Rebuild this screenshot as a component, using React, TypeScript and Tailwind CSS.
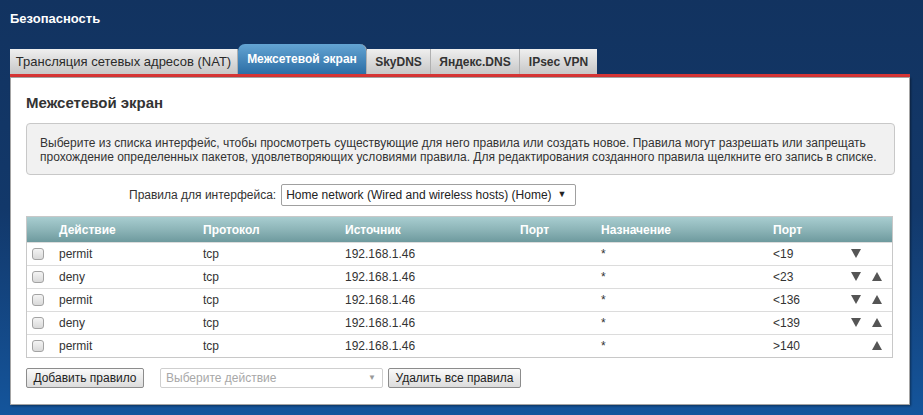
import React from "react";

const rows = [
  { a: "permit", p: "tcp", s: "192.168.1.46", port: "<19", down: true, up: false },
  { a: "deny", p: "tcp", s: "192.168.1.46", port: "<23", down: true, up: true },
  { a: "permit", p: "tcp", s: "192.168.1.46", port: "<136", down: true, up: true },
  { a: "deny", p: "tcp", s: "192.168.1.46", port: "<139", down: true, up: true },
  { a: "permit", p: "tcp", s: "192.168.1.46", port: ">140", down: false, up: true },
];

const Down = () => (
  <svg width="10" height="9" viewBox="0 0 10 9">
    <polygon points="0,0 10,0 5,9" fill="#555" />
  </svg>
);
const Up = () => (
  <svg width="10" height="9" viewBox="0 0 10 9">
    <polygon points="0,9 10,9 5,0" fill="#555" />
  </svg>
);

const Check = () => (
  <div className="w-[12px] h-[12px] rounded-[3px] border border-[#a3a3a3] bg-gradient-to-b from-[#f4f4f4] to-[#d9d9d9]" />
);

export default function App() {
  return (
    <div
      className="w-full h-[415px] bg-gradient-to-b from-[#123360] via-[#12386a] to-[#14559c] overflow-hidden"
      style={{ fontFamily: '"Liberation Sans", Arial, sans-serif' }}
    >
      <div className="h-[44px] pl-[10px] pt-[11px] text-[13px] leading-[16px] font-bold text-white">
        Безопасность
      </div>
      <div className="flex items-end h-[30px] ml-[10px]">
        <div className="w-[228px] h-[25px] flex items-center justify-center text-[13px] text-[#2a2a2a] bg-gradient-to-b from-[#efefef] to-[#c7c7c7] border-r border-[#b0b0b0]">
          Трансляция сетевых адресов (NAT)
        </div>
        <div className="w-[129px] h-[30px] flex items-center justify-center text-[12px] font-bold text-white rounded-t-[7px] bg-gradient-to-b from-[#63a4d3] to-[#2c6ea5] border-r border-[#b0b0b0]">
          Межсетевой экран
        </div>
        <div className="w-[64px] h-[25px] flex items-center justify-center text-[12px] font-bold text-[#333] bg-gradient-to-b from-[#efefef] to-[#c7c7c7] border-r border-[#b0b0b0]">
          SkyDNS
        </div>
        <div className="w-[89px] h-[25px] flex items-center justify-center text-[12px] font-bold text-[#333] bg-gradient-to-b from-[#efefef] to-[#c7c7c7] border-r border-[#b0b0b0]">
          Яндекс.DNS
        </div>
        <div className="w-[77px] h-[25px] flex items-center justify-center text-[12px] font-bold text-[#333] bg-gradient-to-b from-[#efefef] to-[#c7c7c7]">
          IPsec VPN
        </div>
      </div>
      <div className="ml-[10px] w-[900px] h-[3px] bg-[#d63434]" />
      <div className="ml-[10px] w-[900px] h-[328px] bg-white border border-[#a4a4a4] pl-[15px] shadow-[1px_1px_2px_rgba(0,0,0,0.4)]">
        <div className="pt-[16px] text-[15px] leading-[18px] font-bold text-[#333]">
          Межсетевой экран
        </div>
        <div className="mt-[11px] w-[869px] h-[52px] rounded-[4px] border border-[#c8c8c8] bg-[#f1f1f1] pl-[13px] pt-[12px] text-[12px] leading-[14px] text-[#333]">
          Выберите из списка интерфейс, чтобы просмотреть существующие для него правила или создать новое. Правила могут разрешать или запрещать
          <br />
          прохождение определенных пакетов, удовлетворяющих условиями правила. Для редактирования созданного правила щелкните его запись в списке.
        </div>
        <div className="mt-[9px] flex items-center h-[22px] pl-[103px]">
          <span className="text-[12px] text-[#333] mr-[5px]">Правила для интерфейса:</span>
          <div className="h-[22px] w-[295px] border border-[#a0a0a0] rounded-[2px] bg-white flex items-center pl-[4px] text-[12px] text-[#222]">
            Home network (Wired and wireless hosts) (Home)
            <span className="ml-[6px] text-[9px]">▼</span>
          </div>
        </div>
        <div className="mt-[10px] w-[867px] border border-[#c8c8c8] text-[12px] text-[#333]">
          <div className="grid grid-cols-[32px_144px_142px_175px_81px_172px_78px_1fr] h-[25px] items-center bg-gradient-to-b from-[#a8cdd0] via-[#8db5b8] to-[#6e9a9e] text-white font-bold">
            <div />
            <div>Действие</div>
            <div>Протокол</div>
            <div>Источник</div>
            <div>Порт</div>
            <div>Назначение</div>
            <div>Порт</div>
            <div />
          </div>
          {rows.map((r, i) => (
            <div
              key={i}
              className="grid grid-cols-[32px_144px_142px_175px_81px_172px_78px_1fr] h-[23px] items-center border-t border-[#dcdcdc] pb-[1px]"
            >
              <div className="pl-[5px]">
                <Check />
              </div>
              <div>{r.a}</div>
              <div>{r.p}</div>
              <div>{r.s}</div>
              <div />
              <div>*</div>
              <div>{r.port}</div>
              <div className="flex items-center gap-[11px]">
                <div className="w-[10px]">{r.down && <Down />}</div>
                <div className="w-[10px]">{r.up && <Up />}</div>
              </div>
            </div>
          ))}
        </div>
        <div className="mt-[10px] flex items-center h-[20px]">
          <div className="h-[20px] w-[118px] flex items-center justify-center border border-[#8c8c8c] rounded-[2px] bg-gradient-to-b from-[#fafafa] to-[#dcdcdc] text-[12px] text-[#222]">
            Добавить правило
          </div>
          <div className="ml-[16px] h-[20px] w-[223px] flex items-center justify-between border border-[#cfcfcf] rounded-[2px] bg-white pl-[5px] pr-[6px] text-[12px] text-[#a8a8a8]">
            <span>Выберите действие</span>
            <span className="text-[8px] text-[#999]">▼</span>
          </div>
          <div className="ml-[5px] h-[20px] w-[133px] flex items-center justify-center border border-[#8c8c8c] rounded-[2px] bg-gradient-to-b from-[#fafafa] to-[#dcdcdc] text-[12px] text-[#222]">
            Удалить все правила
          </div>
        </div>
      </div>
    </div>
  );
}
